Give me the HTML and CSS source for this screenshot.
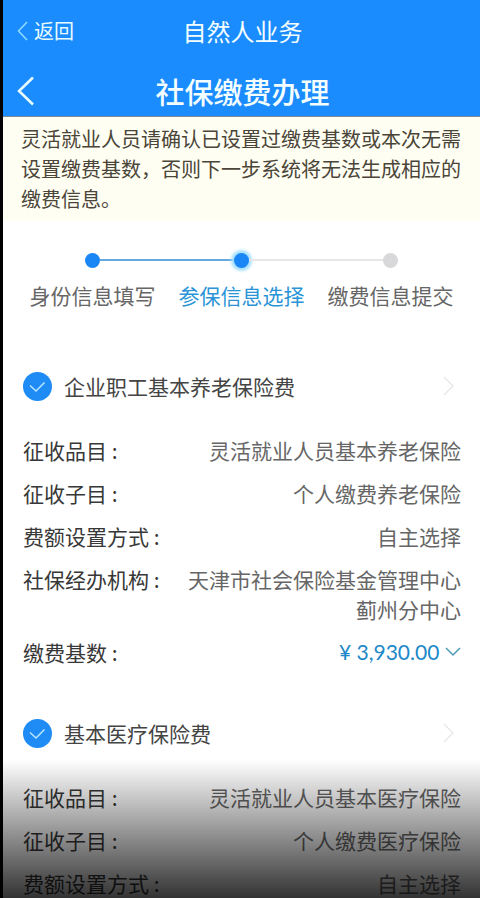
FILE: index.html
```html
<!DOCTYPE html>
<html lang="zh-CN">
<head>
<meta charset="utf-8">
<meta name="viewport" content="width=device-width, initial-scale=1">
<title>社保缴费办理</title>
<link rel="stylesheet" href="styles.css">
</head>
<body>
<div class="screen">
  <header class="header">
    <div class="bar">
      <button class="back" type="button">
        <svg width="11" height="20" viewBox="0 0 11 20" fill="none" stroke="#8fdcff" stroke-width="1.500"><path d="M10 1 1.500 10 10 19"/></svg>
        <span class="back-text">返回</span>
      </button>
      <span class="bar-title">自然人业务</span>
    </div>
    <div class="bar bar-page">
      <button class="back" type="button" aria-label="返回上一步">
        <svg width="18" height="30" viewBox="0 0 18 30" fill="none" stroke="currentColor" stroke-width="2.600"><path d="M16 1.500 2 15 16 28.500"/></svg>
      </button>
      <h1 class="page-title">社保缴费办理</h1>
    </div>
  </header>
  <p class="notice">灵活就业人员请确认已设置过缴费基数或本次无需设置缴费基数，否则下一步系统将无法生成相应的缴费信息。</p>
  <main>
    <ol class="steps">
      <li class="step done"><span class="track"><span class="dot"></span></span>身份信息填写</li>
      <li class="step active" aria-current="step"><span class="track"><span class="dot"></span></span>参保信息选择</li>
      <li class="step"><span class="track"><span class="dot"></span></span>缴费信息提交</li>
    </ol>

    <section class="insurance">
      <div class="insurance-head">
        <input class="check" type="checkbox" id="pension" checked>
        <label class="name" for="pension">企业职工基本养老保险费</label>
        <svg class="arrow" width="12" height="20" viewBox="0 0 12 20" fill="none" stroke="currentColor" stroke-width="1.300"><path d="M1 1 10 10 1 19"/></svg>
      </div>
      <dl class="details">
        <div class="row"><dt>征收品目 :</dt><dd>灵活就业人员基本养老保险</dd></div>
        <div class="row"><dt>征收子目 :</dt><dd>个人缴费养老保险</dd></div>
        <div class="row"><dt>费额设置方式 :</dt><dd>自主选择</dd></div>
        <div class="row"><dt>社保经办机构 :</dt><dd>天津市社会保险基金管理中心蓟州分中心</dd></div>
        <div class="row">
          <dt><label for="base">缴费基数 :</label></dt>
          <dd class="base">
            <select class="base-select" id="base"><option>¥ 3,930.00</option></select>
            <svg class="caret" width="16" height="10" viewBox="0 0 16 10" fill="none" stroke="currentColor" stroke-width="1.500"><path d="M1 1 8 8 15 1"/></svg>
          </dd>
        </div>
      </dl>
    </section>

    <section class="insurance">
      <div class="insurance-head">
        <input class="check" type="checkbox" id="medical" checked>
        <label class="name" for="medical">基本医疗保险费</label>
        <svg class="arrow" width="12" height="20" viewBox="0 0 12 20" fill="none" stroke="currentColor" stroke-width="1.300"><path d="M1 1 10 10 1 19"/></svg>
      </div>
      <dl class="details">
        <div class="row"><dt>征收品目 :</dt><dd>灵活就业人员基本医疗保险</dd></div>
        <div class="row"><dt>征收子目 :</dt><dd>个人缴费医疗保险</dd></div>
        <div class="row"><dt>费额设置方式 :</dt><dd>自主选择</dd></div>
      </dl>
    </section>
  </main>
  <div class="fade"></div>
</div>
</body>
</html>
```
FILE: styles.css
```css
* {
  box-sizing: border-box;
}

body {
  margin: 0;
  background: #fff;
  font-family: "Noto Sans CJK SC", sans-serif;
  font-size: 21px;
  line-height: 30px;
  color: #444;
}

.screen {
  height: 100vh;
  overflow: hidden;
  border-left: 3px solid #000;
}

.header {
  background: #1a8cfe;
  color: #f4feff;
  border-bottom: 1px solid #7d8c96;
}

.bar {
  display: grid;
  grid-template-columns: 1fr auto 1fr;
  align-items: center;
  height: 64px;
  padding: 0 12px 2px 14px;
}

.bar-page {
  height: 52px;
  padding-top: 4px;
}

.back {
  display: flex;
  align-items: center;
  gap: 6px;
  justify-self: start;
  padding: 0;
  border: 0;
  background: none;
  color: #e8fbff;
  font: inherit;
}

.back-text {
  font-size: 20px;
}

.bar-title {
  font-size: 24px;
}

.page-title {
  margin: 0;
  font-size: 29px;
  font-weight: 500;
}

.notice {
  margin: 0;
  padding: 7px 18px;
  background: #fffef3;
  color: #4a4538;
  font-size: 20px;
}

.steps {
  display: flex;
  margin: 0;
  padding: 27px 15px 0;
  list-style: none;
}

.step {
  flex: 1;
  text-align: center;
  color: #666;
  white-space: nowrap;
}

.track {
  display: grid;
  grid-template-columns: 1fr auto 1fr;
  align-items: center;
  height: 24px;
  margin-bottom: 8px;
}

.track::before,
.track::after {
  content: "";
  height: 2px;
  background: #e6e6e8;
}

.done .track::after,
.active .track::before {
  background: #66a9dc;
}

.step:first-child .track::before,
.step:last-child .track::after {
  background: none;
}

.dot {
  width: 15px;
  height: 15px;
  border-radius: 50%;
  background: #d8d7d9;
}

.done .dot,
.active .dot {
  background: #1a86f5;
}

.active .dot {
  box-shadow: 0 0 3px 3px #a5dfff;
}

.active {
  color: #2a94d6;
}

.insurance {
  padding: 0 19px 0 20px;
}

.insurance-head {
  display: flex;
  align-items: center;
  height: 30px;
  margin-top: 61px;
  margin-bottom: 34px;
}

.insurance + .insurance .insurance-head {
  margin-top: 51px;
}

.check {
  appearance: none;
  width: 29px;
  height: 29px;
  margin: 0 12px 0 0;
  border-radius: 50%;
  background: #1f8cf5 url("data:image/svg+xml,%3Csvg xmlns='http://www.w3.org/2000/svg' viewBox='0 0 29 29' fill='none' stroke='%23b9e6ff' stroke-width='1.500'%3E%3Cpath d='M7 13.500 13 19 21.500 10.500'/%3E%3C/svg%3E");
}

.name {
  flex: 1;
}

.arrow {
  margin-right: 6px;
  color: #e6e6e6;
}

.details {
  display: grid;
  gap: 13px;
  margin: 0;
}

.row {
  display: flex;
  justify-content: space-between;
  gap: 20px;
}

dt {
  flex: none;
  color: #383838;
}

dd {
  margin: 0;
  color: #666;
  text-align: right;
}

.base {
  display: flex;
  align-items: center;
  gap: 5px;
  color: #2088c8;
}

.base-select {
  appearance: none;
  padding: 0;
  border: 0;
  background: none;
  color: inherit;
  font-family: Lato, "Noto Sans CJK SC", sans-serif;
  font-size: 21px;
  line-height: 30px;
}

.caret {
  color: #4b9cb4;
}

.fade {
  position: fixed;
  right: 0;
  bottom: 0;
  left: 0;
  height: 138px;
  background: linear-gradient(rgba(0, 0, 0, 0), rgba(0, 0, 0, 0.8));
  pointer-events: none;
}
```
